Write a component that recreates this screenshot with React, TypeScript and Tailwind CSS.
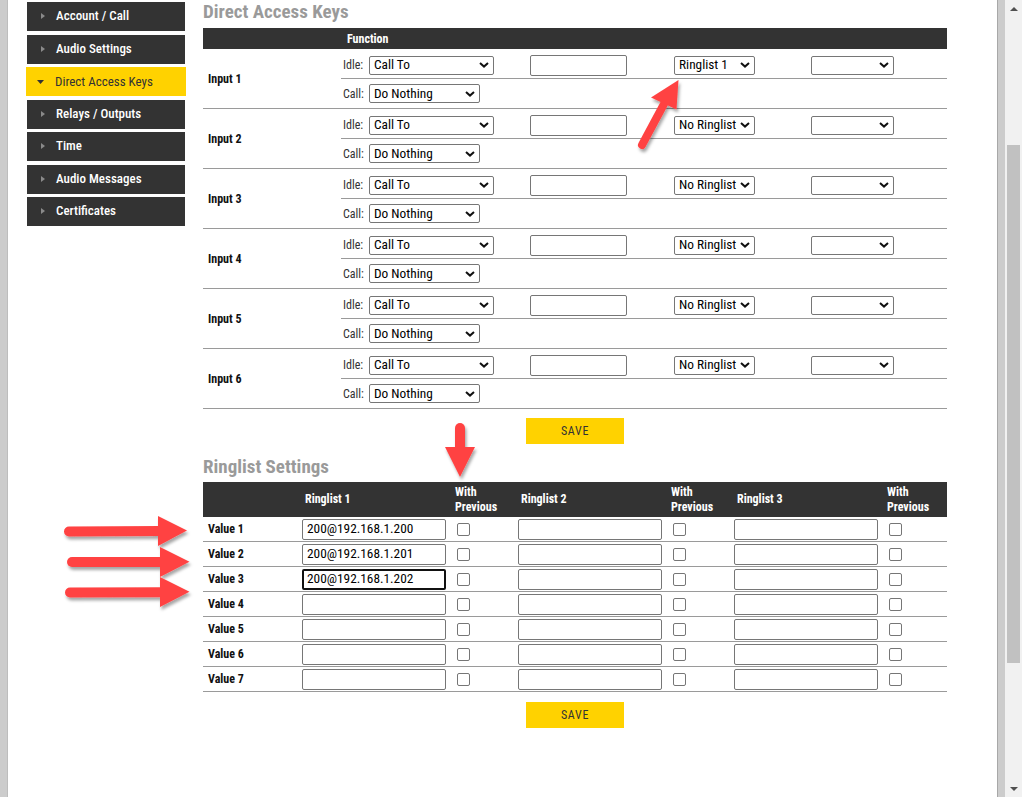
import React from "react";

const Chevron = () => (
  <svg width="10" height="6" viewBox="0 0 10 6" className="shrink-0">
    <path d="M1 1l4 3.6L9 1" fill="none" stroke="#111" strokeWidth="2" />
  </svg>
);

function Select({ value, className }: { value: string; className: string }) {
  return (
    <div
      className={`flex h-[19px] items-center justify-between rounded-[2px] border border-[#767676] bg-white pl-[4px] pr-[4px] text-[13.33px] leading-none text-black ${className}`}
    >
      <span className="whitespace-nowrap">{value}</span>
      <Chevron />
    </div>
  );
}

function TextBox({ value = "", focused = false, className }: { value?: string; focused?: boolean; className: string }) {
  return (
    <div
      className={`flex h-[21px] items-center rounded-[2px] bg-white text-[13.33px] leading-none text-black ${
        focused ? "border-2 border-[#111] pl-[3px]" : "border border-[#767676] pl-[4px]"
      } ${className}`}
    >
      <span className="whitespace-nowrap">{value}</span>
    </div>
  );
}

const Check = () => (
  <input
    type="checkbox"
    className="m-0 block h-[13px] w-[13px] appearance-none rounded-[2px] border border-[#767676] bg-white"
  />
);

const menu = [
  "Account / Call",
  "Audio Settings",
  "Direct Access Keys",
  "Relays / Outputs",
  "Time",
  "Audio Messages",
  "Certificates",
];

const inputs = [1, 2, 3, 4, 5, 6];
const values = [1, 2, 3, 4, 5, 6, 7];
const ring1 = ["200@192.168.1.200", "200@192.168.1.201", "200@192.168.1.202"];

function SaveButton() {
  return (
    <div className="flex justify-center">
      <button className="flex h-[26px] w-[98px] items-center justify-center bg-[#ffd200] text-[12px] tracking-[0.06em] text-[#333]">
        SAVE
      </button>
    </div>
  );
}

function Arrows() {
  return (
    <svg className="pointer-events-none absolute left-0 top-0" width="1022" height="797" viewBox="0 0 1022 797">
      <defs>
        <filter id="sh" x="-20%" y="-20%" width="140%" height="160%">
          <feDropShadow dx="1.5" dy="3" stdDeviation="1.6" floodColor="#000" floodOpacity="0.35" />
        </filter>
      </defs>
      <g fill="#ff4343" stroke="#ff4343" filter="url(#sh)">
        {/* up-right arrow */}
        <line x1="642" y1="145" x2="664" y2="104" strokeWidth="8" strokeLinecap="round" />
        <polygon points="678.5,80 651,97.5 676.5,109.5" stroke="none" />
        {/* down arrow */}
        <line x1="460" y1="428" x2="460" y2="450" strokeWidth="10" strokeLinecap="round" />
        <polygon points="445,447 475,447 460,477" stroke="none" />
        {/* horizontal arrows */}
        <line x1="69" y1="531.5" x2="160" y2="531" strokeWidth="10" strokeLinecap="round" />
        <polygon points="158,516 158,546 187,530.5" stroke="none" />
        <line x1="72" y1="562" x2="162" y2="562" strokeWidth="10" strokeLinecap="round" />
        <polygon points="160,547 160,577 189.5,561.7" stroke="none" />
        <line x1="70" y1="592.5" x2="162" y2="592.3" strokeWidth="10" strokeLinecap="round" />
        <polygon points="160,577 160,607 189.5,591.8" stroke="none" />
      </g>
    </svg>
  );
}

export default function App() {
  return (
    <div className="relative flex h-[797px] w-[1022px] overflow-hidden bg-white font-['Roboto',sans-serif] font-stretch-[80%]">
      {/* left strip */}
      <div className="h-full w-[8px] shrink-0 border-r border-[#bdbdbd] bg-[#cccccc]" />

      {/* sidebar */}
      <aside className="ml-[19px] mt-[2px] flex w-[158px] shrink-0 flex-col gap-[3.5px]">
        {menu.map((m) => {
          const active = m === "Direct Access Keys";
          return active ? (
            <div key={m} className="-mx-[1px] flex h-[29px] items-center bg-[#ffd200] pl-[11px] text-[13px] text-[#333]">
              <svg width="7" height="4" viewBox="0 0 7 4" className="mr-[11px]">
                <path d="M0 0h7L3.5 4z" fill="#333" />
              </svg>
              {m}
            </div>
          ) : (
            <div key={m} className="flex h-[29px] items-center bg-[#333333] pb-[1px] pl-[14px] text-[13px] font-medium text-white">
              <svg width="4" height="6" viewBox="0 0 4 6" className="mr-[11px]">
                <path d="M0 0l4 3-4 3z" fill="#8a8a8a" />
              </svg>
              {m}
            </div>
          );
        })}
      </aside>

      {/* main */}
      <main className="ml-[18px] w-[744px] shrink-0">
        <h1 className="h-[28px] text-[19px] font-bold leading-[23px] text-[#9a9a9a] font-stretch-[75%]">Direct Access Keys</h1>

        <div className="grid h-[21px] grid-cols-[138px_1fr] items-center bg-[#333333] text-[12px] font-bold text-white">
          <div />
          <div className="pl-[6px]">Function</div>
        </div>

        {inputs.map((n) => (
          <div key={n} className="grid grid-cols-[138px_1fr] border-b border-[#9a9a9a]">
            <div className="flex items-center pl-[5px] text-[12px] font-bold text-[#111]">Input {n}</div>
            <div>
              <div className="grid h-[30px] grid-cols-[189px_144px_137px_1fr] items-center border-b border-[#9a9a9a] pt-[3px]">
                <div className="flex items-center pl-[2px]">
                  <span className="w-[26px] text-[12px] text-[#333]">Idle:</span>
                  <Select value="Call To" className="w-[125px]" />
                </div>
                <TextBox className="w-[97px]" />
                <Select value={n === 1 ? "Ringlist 1" : "No Ringlist"} className="w-[81px]" />
                <Select value="" className="w-[83px]" />
              </div>
              <div className="flex h-[29px] items-center pl-[2px]">
                <span className="w-[26px] text-[12px] text-[#333]">Call:</span>
                <Select value="Do Nothing" className="w-[111px]" />
              </div>
            </div>
          </div>
        ))}

        <div className="mt-[9px]">
          <SaveButton />
        </div>

        <h2 className="mt-[10px] h-[28px] pt-[1px] text-[19px] font-bold leading-[23px] text-[#9a9a9a] font-stretch-[75%]">
          Ringlist Settings
        </h2>

        <div className="grid h-[35px] grid-cols-[98px_152px_64px_152px_64px_152px_1fr] items-center bg-[#333333] text-[12px] font-bold leading-[15px] text-white">
          <div />
          <div className="pl-[4px]">Ringlist 1</div>
          <div className="pl-[2px]">
            With
            <br />
            Previous
          </div>
          <div className="pl-[4px]">Ringlist 2</div>
          <div className="pl-[2px]">
            With
            <br />
            Previous
          </div>
          <div className="pl-[4px]">Ringlist 3</div>
          <div className="pl-[2px]">
            With
            <br />
            Previous
          </div>
        </div>

        {values.map((v, i) => (
          <div
            key={v}
            className="grid h-[25px] grid-cols-[98px_152px_64px_152px_64px_152px_1fr] items-center border-b border-[#9a9a9a]"
          >
            <div className="pl-[5px] text-[12px] font-bold text-[#111]">Value {v}</div>
            <div className="pl-[1px]">
              <TextBox value={ring1[i] ?? ""} focused={i === 2} className="w-[144px]" />
            </div>
            <div className="pl-[4px]">
              <Check />
            </div>
            <div className="pl-[1px]">
              <TextBox className="w-[144px]" />
            </div>
            <div className="pl-[4px]">
              <Check />
            </div>
            <div className="pl-[1px]">
              <TextBox className="w-[144px]" />
            </div>
            <div className="pl-[4px]">
              <Check />
            </div>
          </div>
        ))}

        <div className="mt-[10px]">
          <SaveButton />
        </div>
      </main>

      <div className="flex-1" />

      {/* right strip */}
      <div className="h-full w-[8px] shrink-0 border-l border-[#a8a8a8] bg-[#cccccc]" />

      {/* scrollbar */}
      <div className="flex h-full w-[17px] shrink-0 flex-col items-center bg-[#f1f1f1]">
        <div className="flex h-[17px] w-full items-center justify-center">
          <svg width="8" height="4" viewBox="0 0 8 4">
            <path d="M0 4L4 0l4 4z" fill="#505050" />
          </svg>
        </div>
        <div className="mt-[128px] h-[518px] w-[13px] bg-[#c1c1c1]" />
        <div className="flex-1" />
        <div className="flex h-[17px] w-full items-center justify-center">
          <svg width="8" height="4" viewBox="0 0 8 4">
            <path d="M0 0h8L4 4z" fill="#505050" />
          </svg>
        </div>
      </div>

      <Arrows />
    </div>
  );
}
